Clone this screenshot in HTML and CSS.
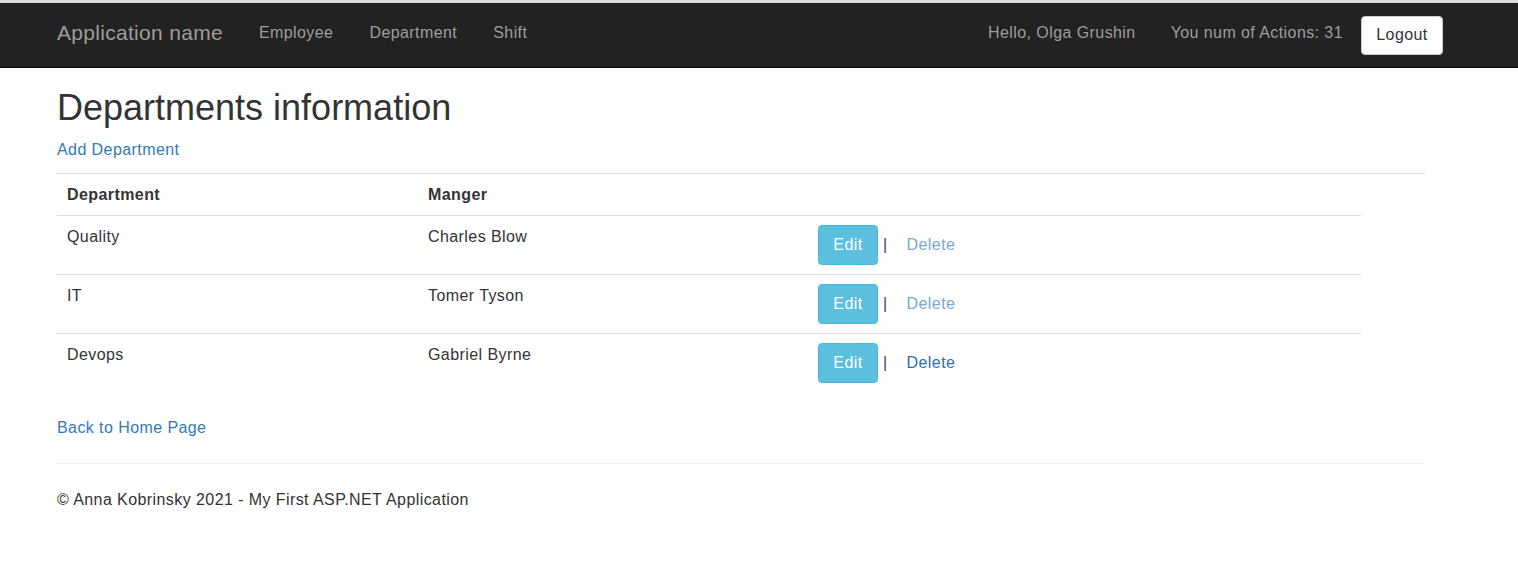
FILE: index.html
```html
<!DOCTYPE html>
<html>
<head>
<meta charset="utf-8">
<title>Departments information</title>
<link rel="stylesheet" href="styles.css">
</head>
<body>
<div class="topstrip"></div>
<nav class="navbar">
  <div class="nav-inner">
    <div class="nav-left">
      <a class="brand" href="#">Application name</a>
      <a class="nav-link" href="#">Employee</a>
      <a class="nav-link" href="#">Department</a>
      <a class="nav-link" href="#">Shift</a>
    </div>
    <div class="nav-right">
      <span class="nav-text">Hello, Olga Grushin</span>
      <span class="nav-text">You num of Actions: 31</span>
      <button class="btn-logout">Logout</button>
    </div>
  </div>
</nav>
<main class="container">
  <h1 class="title">Departments information</h1>
  <p class="add"><a href="#">Add Department</a></p>
  <div class="rule"></div>
  <table class="table">
    <thead>
      <tr><th class="c1">Department</th><th class="c2">Manger</th><th class="c3"></th></tr>
    </thead>
    <tbody>
      <tr><td>Quality</td><td>Charles Blow</td><td class="act"><button class="btn-edit">Edit</button><span class="sep">|</span><a class="del faded" href="#">Delete</a></td></tr>
      <tr><td>IT</td><td>Tomer Tyson</td><td class="act"><button class="btn-edit">Edit</button><span class="sep">|</span><a class="del faded" href="#">Delete</a></td></tr>
      <tr><td>Devops</td><td>Gabriel Byrne</td><td class="act"><button class="btn-edit">Edit</button><span class="sep">|</span><a class="del" href="#">Delete</a></td></tr>
    </tbody>
  </table>
  <p class="back"><a href="#">Back to Home Page</a></p>
  <hr class="foot-rule">
  <footer class="footer">© Anna Kobrinsky 2021 - My First ASP.NET Application</footer>
</main>
</body>
</html>
```

FILE: styles.css
```css
* { box-sizing: border-box; }
html, body { margin: 0; padding: 0; background: #fff; }
body {
  font-family: "Liberation Sans", Arial, Helvetica, sans-serif;
  font-size: 16px;
  line-height: 1.42857;
  color: #333;
  letter-spacing: 0.42px;
}
a { color: #337ab7; text-decoration: none; }
.topstrip { height: 3px; background: #dcdcdc; }
.navbar {
  background: #222;
  border-bottom: 1px solid #080808;
  height: 65px;
}
.nav-inner {
  margin-left: 57px;
  width: 1386px;
  height: 64px;
  display: flex;
  justify-content: space-between;
  align-items: center;
}
.nav-left, .nav-right { display: flex; align-items: center; }
.brand {
  color: #9d9d9d;
  font-size: 21px;
  letter-spacing: 0.3px;
  margin-right: 36px;
  margin-top: -4px;
}
.nav-link {
  color: #9d9d9d;
  margin-right: 36px;
  margin-top: -4px;
}
.nav-text {
  color: #9d9d9d;
  margin-right: 35px;
  margin-top: -4px;
}
.nav-text:nth-child(2) { margin-right: 18px; }
.btn-logout {
  font-family: inherit;
  font-size: 16px;
  letter-spacing: 0.42px;
  color: #333;
  background: #fff;
  border: 1px solid #ccc;
  border-radius: 4px;
  width: 82px;
  height: 39px;
  padding: 0 0 1px;
  margin-top: 0;
}
.container {
  margin-left: 57px;
  width: 1368px;
}
.title {
  font-size: 36px;
  font-weight: 500;
  line-height: 1.1;
  margin: 20px 0 0;
  letter-spacing: 0;
}
.add { margin: 11px 0 0; }
.rule { height: 1px; background: #ddd; margin-top: 12px; }
.table {
  border-collapse: collapse;
  width: 1304px;
  margin-bottom: 25px;
}
.table th, .table td {
  text-align: left;
  vertical-align: top;
}
.table th {
  padding: 10px 10px 8px;
  font-weight: bold;
}
.c1 { width: 361px; }
.c2 { width: 390px; }
.table td {
  padding: 10px 10px 8px;
  border-top: 1px solid #ddd;
}
.table td.act { padding: 9px 10px; }
.btn-edit {
  font-family: inherit;
  font-size: 16px;
  letter-spacing: 0.42px;
  color: #fff;
  background: #5bc0de;
  border: 1px solid #46b8da;
  border-radius: 4px;
  width: 60px;
  height: 40px;
  padding: 0;
  vertical-align: middle;
}
.sep {
  color: #4e2f86;
  margin-left: 5px;
  margin-right: 19px;
  vertical-align: middle;
}
.del { vertical-align: middle; color: #2f6fad; }
.del.faded { color: #7aa8d3; }
.back { margin: 0; }
.foot-rule {
  border: 0;
  border-top: 1px solid #eee;
  margin: 23px 0 0;
}
.footer { padding-top: 25px; }
```
